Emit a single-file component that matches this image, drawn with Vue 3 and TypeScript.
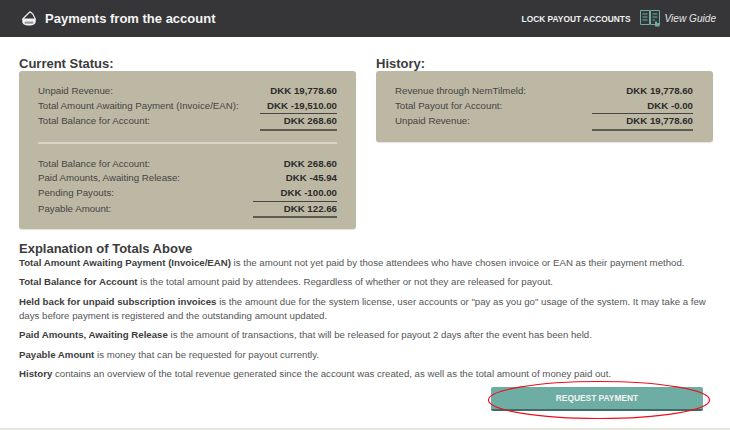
<script setup lang="ts">
interface Row { label: string; value: string; rule?: boolean; total?: boolean }
const first: Row[] = [
  { label: 'Unpaid Revenue:', value: 'DKK 19,778.60' },
  { label: 'Total Amount Awaiting Payment (Invoice/EAN):', value: 'DKK -19,510.00', rule: true },
  { label: 'Total Balance for Account:', value: 'DKK 268.60', total: true },
]
const second: Row[] = [
  { label: 'Total Balance for Account:', value: 'DKK 268.60' },
  { label: 'Paid Amounts, Awaiting Release:', value: 'DKK -45.94' },
  { label: 'Pending Payouts:', value: 'DKK -100.00', rule: true },
  { label: 'Payable Amount:', value: 'DKK 122.66', total: true },
]
const history: Row[] = [
  { label: 'Revenue through NemTilmeld:', value: 'DKK 19,778.60' },
  { label: 'Total Payout for Account:', value: 'DKK -0.00', rule: true },
  { label: 'Unpaid Revenue:', value: 'DKK 19,778.60', total: true },
]
</script>

<template>
  <div class="page">
    <header class="bar">
      <div class="title">
        <svg class="bank" width="14" height="15" viewBox="0 0 14 15">
          <path d="M8 0.8 L0.7 8 H13.3 L10.8 3 Z" fill="none" stroke="#e8e8e8" stroke-width="1.2" stroke-linejoin="round" />
          <path d="M0.3 8 H13.7 V10.5 C13.7 13 11 14.6 7 14.6 C3 14.6 0.3 13 0.3 10.5 Z" fill="#f2f2f2" />
          <rect x="2.5" y="10.6" width="9" height="2.2" rx="1" fill="#9a9a9a" />
        </svg>
        <h1>Payments from the account</h1>
      </div>
      <div class="actions">
        <span class="lock">LOCK PAYOUT ACCOUNTS</span>
        <svg class="guide" width="21" height="17" viewBox="0 0 21 17" fill="none" stroke="#6dada3" stroke-width="1">
          <path d="M0.5 0.5 H9.5 V14.5 H0.5 Z M10.5 0.5 H19.5 V14.5 H10.5 Z" />
          <path d="M2.5 4 H7.5 M2.5 7 H7.5 M2.5 10 H7.5 M12.5 4 H17.5 M12.5 7 H17.5 M12.5 10 H15" />
          <path d="M15 16.5 V11.5 H17 V13 H19.5 V16.5 Z" fill="#6dada3" stroke="none" />
        </svg>
        <em class="view">View Guide</em>
      </div>
    </header>

    <main class="content">
      <div class="columns">
        <section class="col">
          <h2>Current Status:</h2>
          <div class="panel tall">
            <div v-for="r in first" :key="r.label" class="row">
              <span>{{ r.label }}</span>
              <b :class="['short', { under: r.rule, total: r.total }]">{{ r.value }}</b>
            </div>
            <hr />
            <div v-for="r in second" :key="r.label" class="row">
              <span>{{ r.label }}</span>
              <b :class="['long', { under: r.rule, total: r.total }]">{{ r.value }}</b>
            </div>
          </div>
        </section>
        <section class="col">
          <h2>History:</h2>
          <div class="panel wide">
            <div v-for="r in history" :key="r.label" class="row">
              <span>{{ r.label }}</span>
              <b :class="['hist', { under: r.rule, total: r.total }]">{{ r.value }}</b>
            </div>
          </div>
        </section>
      </div>

      <h3>Explanation of Totals Above</h3>
      <p><strong>Total Amount Awaiting Payment (Invoice/EAN)</strong> is the amount not yet paid by those attendees who have chosen invoice or EAN as their payment method.</p>
      <p><strong>Total Balance for Account</strong> is the total amount paid by attendees. Regardless of whether or not they are released for payout.</p>
      <p><strong>Held back for unpaid subscription invoices</strong> is the amount due for the system license, user accounts or "pay as you go" usage of the system. It may take a few days before payment is registered and the outstanding amount updated.</p>
      <p><strong>Paid Amounts, Awaiting Release</strong> is the amount of transactions, that will be released for payout 2 days after the event has been held.</p>
      <p><strong>Payable Amount</strong> is money that can be requested for payout currently.</p>
      <p><strong>History</strong> contains an overview of the total revenue generated since the account was created, as well as the total amount of money paid out.</p>

      <div class="cta">
        <button type="button">REQUEST PAYMENT</button>
        <svg class="ring" width="224" height="40" viewBox="0 0 224 40">
          <ellipse cx="112" cy="20" rx="110.5" ry="18.5" fill="none" stroke="#ee0f1c" stroke-width="1.2" />
        </svg>
      </div>
    </main>
    <div class="foot"></div>
  </div>
</template>

<style scoped>
.page { width: 730px; height: 430px; overflow: hidden; background: #fff; font-family: "Liberation Sans", Arial, sans-serif; color: #444; position: relative; }
.bar { height: 37px; background: #363638; display: flex; align-items: center; justify-content: space-between; padding: 0 14px 0 22px; box-sizing: border-box; }
.title { display: flex; align-items: center; gap: 9px; }
.bank { display: block; }
h1 { margin: 0; font-size: 13px; font-weight: 700; color: #f4f4f4; }
.actions { display: flex; align-items: center; }
.lock { font-size: 8.4px; font-weight: 700; color: #f0f0f0; margin-right: 9px; }
.guide { margin-right: 4px; }
.view { font-size: 10.1px; color: #e6e6e6; }
.content { padding: 0 17px 0 19px; }
.columns { display: flex; gap: 20px; padding-top: 20px; }
.col { width: 337px; }
h2 { margin: 0; font-size: 13px; line-height: 14px; font-weight: 700; color: #3c3c3c; }
.panel { background: #bdb8a3; border-radius: 3px; padding: 13px 19px 11.5px; box-shadow: 0 1px 1px rgba(0,0,0,.12); }
.panel.tall { padding-bottom: 11px; }
.panel.wide { padding-right: 20px; }
.row { display: flex; justify-content: space-between; font-size: 9.7px; line-height: 14.6px; color: #444; }
.row b { color: #2b2b2b; text-align: right; }
.under { border-bottom: 1px solid #444; }
.short { min-width: 77px; }
.long { min-width: 84px; }
.hist { min-width: 101px; }
.total { border-bottom: 2px solid #5c5b50; }
hr { border: 0; height: 2px; background: #d8d5c7; margin: 11px 0 13px; }
h3 { margin: 12px 0 0; font-size: 13px; line-height: 15px; font-weight: 700; color: #3c3c3c; }
p { margin: 0 0 4.6px; font-size: 9.67px; line-height: 14.6px; color: #555; }
p strong { color: #3d3d3d; }
.cta { display: flex; justify-content: flex-end; margin-right: 10px; position: relative; margin-top: 6px; }
button { width: 212px; height: 24px; border: 0; border-radius: 2px; background: #6dada3; border-bottom: 2px solid #3f6a66; color: #f4f4f4; font: 700 8.4px "Liberation Sans", Arial, sans-serif; padding: 0; }
.ring { position: absolute; right: -8px; top: -7.5px; }
.foot { position: absolute; left: 0; right: 0; top: 428px; height: 2px; background: #e6e5de; }
</style>
